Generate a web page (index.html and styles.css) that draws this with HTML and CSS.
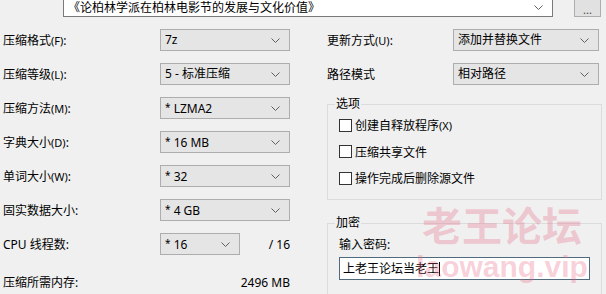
FILE: index.html
```html
<!DOCTYPE html>
<html lang="zh-CN">
<head>
<meta charset="UTF-8">
<title>添加到压缩包</title>
<link rel="stylesheet" href="styles.css">
</head>
<body>

<div class="top">
  <div class="combo path">
    <span class="combo-text">《论柏林学派在柏林电影节的发展与文化价值》</span>
    <svg class="arrow" width="9" height="5" viewBox="0 0 9 5"><path d="M0.5 0.5 L4.5 4.5 L8.5 0.5" fill="none" stroke="#606060" stroke-width="1"/></svg>
  </div>
  <button class="more">...</button>
</div>

<div class="main">
  <div class="col left">
    <div class="row">
      <label>压缩格式<span class="key">(F)</span>:</label>
      <div class="combo"><span class="combo-text">7z</span><svg class="arrow" width="9" height="5" viewBox="0 0 9 5"><path d="M0.5 0.5 L4.5 4.5 L8.5 0.5" fill="none" stroke="#606060" stroke-width="1"/></svg></div>
    </div>
    <div class="row">
      <label>压缩等级<span class="key">(L)</span>:</label>
      <div class="combo"><span class="combo-text">5 - 标准压缩</span><svg class="arrow" width="9" height="5" viewBox="0 0 9 5"><path d="M0.5 0.5 L4.5 4.5 L8.5 0.5" fill="none" stroke="#606060" stroke-width="1"/></svg></div>
    </div>
    <div class="row">
      <label>压缩方法<span class="key">(M)</span>:</label>
      <div class="combo"><span class="combo-text"><span class="star">*</span> LZMA2</span><svg class="arrow" width="9" height="5" viewBox="0 0 9 5"><path d="M0.5 0.5 L4.5 4.5 L8.5 0.5" fill="none" stroke="#606060" stroke-width="1"/></svg></div>
    </div>
    <div class="row">
      <label>字典大小<span class="key">(D)</span>:</label>
      <div class="combo"><span class="combo-text"><span class="star">*</span> 16 MB</span><svg class="arrow" width="9" height="5" viewBox="0 0 9 5"><path d="M0.5 0.5 L4.5 4.5 L8.5 0.5" fill="none" stroke="#606060" stroke-width="1"/></svg></div>
    </div>
    <div class="row">
      <label>单词大小<span class="key">(W)</span>:</label>
      <div class="combo"><span class="combo-text"><span class="star">*</span> 32</span><svg class="arrow" width="9" height="5" viewBox="0 0 9 5"><path d="M0.5 0.5 L4.5 4.5 L8.5 0.5" fill="none" stroke="#606060" stroke-width="1"/></svg></div>
    </div>
    <div class="row">
      <label>固实数据大小:</label>
      <div class="combo"><span class="combo-text"><span class="star">*</span> 4 GB</span><svg class="arrow" width="9" height="5" viewBox="0 0 9 5"><path d="M0.5 0.5 L4.5 4.5 L8.5 0.5" fill="none" stroke="#606060" stroke-width="1"/></svg></div>
    </div>
    <div class="row">
      <label>CPU 线程数:</label>
      <div class="combo short"><span class="combo-text"><span class="star">*</span> 16</span><svg class="arrow" width="9" height="5" viewBox="0 0 9 5"><path d="M0.5 0.5 L4.5 4.5 L8.5 0.5" fill="none" stroke="#606060" stroke-width="1"/></svg></div>
      <span class="value">/ 16</span>
    </div>
    <div class="row mem">
      <label>压缩所需内存:</label>
      <span class="value">2496 MB</span>
    </div>
  </div>

  <div class="col right">
    <div class="row">
      <label class="wide">更新方式<span class="key">(U)</span>:</label>
      <div class="combo wide-combo"><span class="combo-text">添加并替换文件</span><svg class="arrow" width="9" height="5" viewBox="0 0 9 5"><path d="M0.5 0.5 L4.5 4.5 L8.5 0.5" fill="none" stroke="#606060" stroke-width="1"/></svg></div>
    </div>
    <div class="row">
      <label class="wide">路径模式</label>
      <div class="combo wide-combo"><span class="combo-text">相对路径</span><svg class="arrow" width="9" height="5" viewBox="0 0 9 5"><path d="M0.5 0.5 L4.5 4.5 L8.5 0.5" fill="none" stroke="#606060" stroke-width="1"/></svg></div>
    </div>

    <fieldset class="group options">
      <legend>选项</legend>
      <div class="check"><span class="box"></span>创建自释放程序<span class="key">(X)</span></div>
      <div class="check"><span class="box"></span>压缩共享文件</div>
      <div class="check"><span class="box"></span>操作完成后删除源文件</div>
    </fieldset>

    <fieldset class="group crypt">
      <legend>加密</legend>
      <div class="pw-label">输入密码:</div>
      <div class="pw-input">上老王论坛当老王<span class="caret"></span></div>
    </fieldset>
  </div>
</div>

<div class="watermark">
  <div class="wm-cn">老王论坛</div>
  <div class="wm-en">laowang.vip</div>
</div>

</body>
</html>
```

FILE: styles.css
```css
html, body {
  margin: 0;
  padding: 0;
  height: 100%;
  overflow: hidden;
}

body {
  background-color: #f0f0f0;
  font-family: "Noto Sans", "Noto Sans CJK SC", sans-serif;
  font-size: 12px;
  color: #000;
  position: relative;
}

.top {
  display: flex;
  align-items: flex-start;
  margin-top: -5px;
  padding-left: 63px;
  height: 22px;
}

.combo {
  box-sizing: border-box;
  height: 22px;
  width: 130px;
  border: 1px solid #adadad;
  background: #e5e5e5;
  display: flex;
  align-items: center;
  justify-content: space-between;
  padding: 0 9px 0 4px;
  line-height: 16px;
  white-space: nowrap;
}

.combo.path {
  width: 490px;
  background: #fff;
  border-color: #7a7a7a;
  padding-top: 3px;
}

.combo.short {
  width: 80px;
}

.combo.wide-combo {
  width: 146px;
}

.arrow {
  flex: none;
}

.star {
  font-size: 10px;
  vertical-align: 2px;
}

.more {
  box-sizing: border-box;
  margin-left: 21px;
  width: 27px;
  height: 22px;
  border: 1px solid #adadad;
  background: #e1e1e1;
  color: #444;
  font-size: 11px;
  padding: 6px 0 0;
  font-family: inherit;
}

.main {
  display: flex;
  padding-top: 6px;
  padding-left: 3px;
}

.col.left {
  width: 287px;
}

.col.right {
  margin-left: 37px;
  width: 275px;
}

.row {
  display: flex;
  align-items: center;
  height: 34px;
}

.row label {
  width: 157px;
  flex: none;
}

.row label.wide {
  width: 126px;
}

.key {
  font-size: 11px;
}

.value {
  margin-left: auto;
}

.row.mem {
  margin-top: 4px;
}

.group {
  margin: 0;
  border: 1px solid #dcdcdc;
  padding: 0 0 0 11px;
}

.group legend {
  padding: 0 1px;
  margin-left: -4px;
  line-height: 16px;
}

.options {
  margin-top: 5px;
  height: 104px;
  box-sizing: border-box;
}

.check {
  display: flex;
  align-items: center;
  height: 26.5px;
}

.box {
  box-sizing: border-box;
  width: 13px;
  height: 13px;
  border: 1px solid #333;
  background: #fff;
  margin-right: 3px;
}

.crypt {
  margin-top: 15px;
  height: 90px;
  box-sizing: border-box;
}

.pw-label {
  margin-top: 5px;
  height: 18px;
  line-height: 18px;
}

.pw-input {
  box-sizing: border-box;
  margin-top: 3px;
  width: 251px;
  height: 23px;
  border: 1px solid #4f6b7d;
  background: #fff;
  padding: 0 3px;
  line-height: 21px;
  display: flex;
  align-items: center;
}

.caret {
  width: 1px;
  height: 14px;
  background: #000;
}

.watermark {
  position: absolute;
  left: 412px;
  top: 199px;
  width: 180px;
  text-align: center;
  color: rgba(232, 96, 124, 0.3);
  font-weight: bold;
  pointer-events: none;
}

.wm-cn {
  font-family: "Noto Sans CJK SC", sans-serif;
  font-size: 40px;
  line-height: 50px;
}

.wm-en {
  font-family: "Liberation Sans", sans-serif;
  font-size: 30px;
  line-height: 36px;
}
```
